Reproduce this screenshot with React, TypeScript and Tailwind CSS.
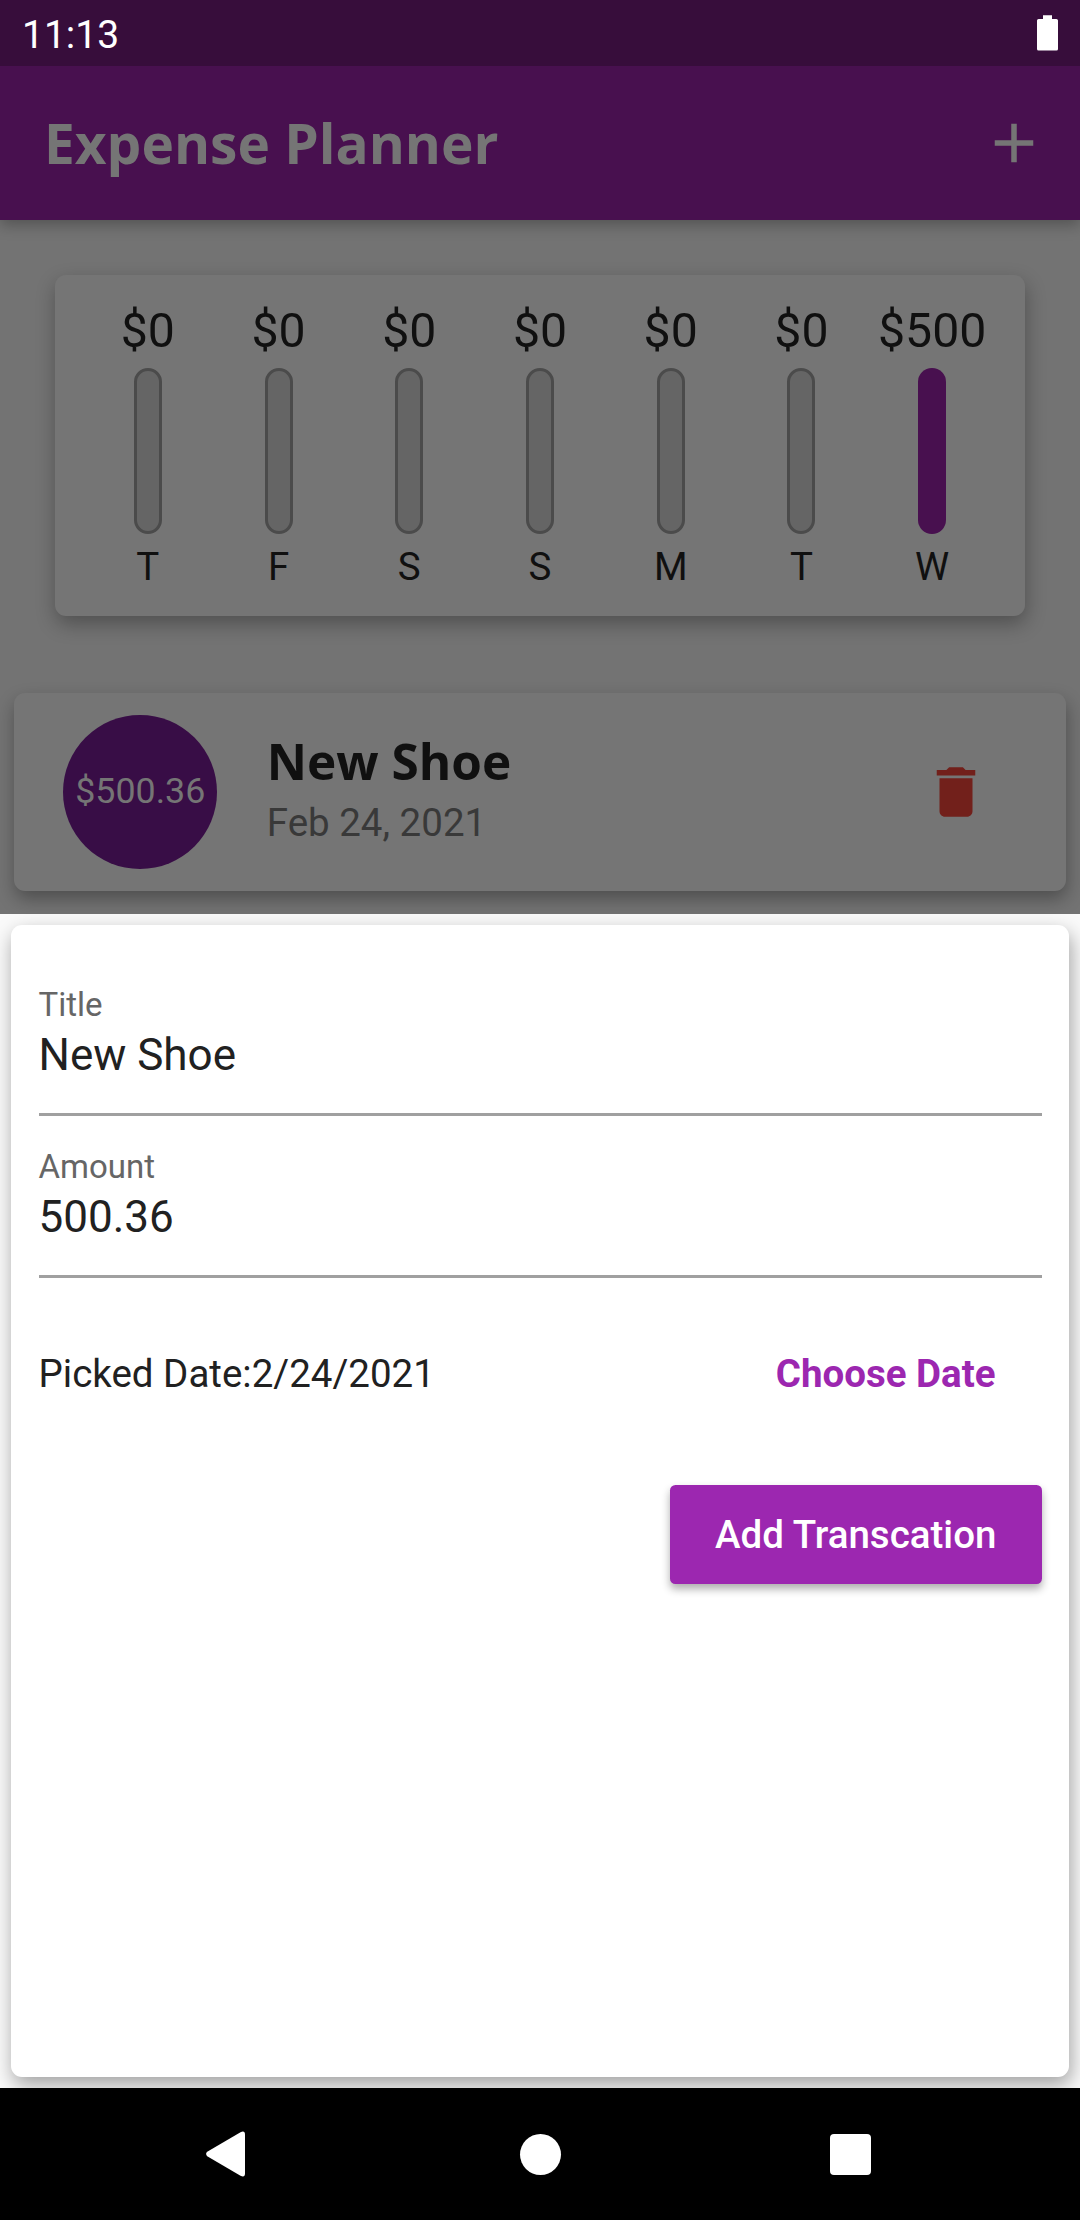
const days = [
  { label: "T", amount: "$0", share: 0 },
  { label: "F", amount: "$0", share: 0 },
  { label: "S", amount: "$0", share: 0 },
  { label: "S", amount: "$0", share: 0 },
  { label: "M", amount: "$0", share: 0 },
  { label: "T", amount: "$0", share: 0 },
  { label: "W", amount: "$500", share: 1 },
];

function StatusBar() {
  return (
    <div className="flex h-[66px] shrink-0 items-start justify-between bg-[#370d3b] pr-[22px] pl-[22px] text-white">
      <span className="mt-[11px] text-[39px] leading-[48px]">11:13</span>
      <svg className="mt-[15px]" width="21" height="36" viewBox="0 0 21 36" fill="currentColor">
        <path d="M6 0.3h9V4h4.4A1.6 1.6 0 0 1 21 5.600V34a1.600 1.600 0 0 1-1.600 1.600H1.600A1.600 1.600 0 0 1 0 34V5.600A1.600 1.600 0 0 1 1.600 4H6z" />
      </svg>
    </div>
  );
}

function AppBar() {
  return (
    <header className="flex h-[154px] shrink-0 items-center justify-between bg-[#48104f] pr-[33px] pl-[44px] text-[#757575] shadow-[0_5px_14px_rgba(0,0,0,0.28)]">
      <h1 className="mb-[2px] font-['Open_Sans'] text-[55px] leading-[75px] font-bold">Expense Planner</h1>
      <svg width="66" height="66" viewBox="0 0 24 24" fill="currentColor">
        <path d="M19 13h-6v6h-2v-6H5v-2h6V5h2v6h6v2z" />
      </svg>
    </header>
  );
}

function Chart() {
  return (
    <section className="mx-[55px] mt-[55px] grid h-[341px] shrink-0 grid-cols-7 rounded-[11px] bg-[#757575] px-[27.5px] pt-[28px] text-[#101010] shadow-[1px_8px_20px_rgba(0,0,0,0.3)]">
      {days.map((day, i) => (
        <div key={i} className="flex min-w-0 flex-col items-center">
          <span className="text-[48.2px] leading-[56px] whitespace-nowrap">{day.amount}</span>
          <div
            className={
              day.share > 0
                ? "mt-[9px] h-[166px] w-[28px] rounded-full bg-[#48104f]"
                : "mt-[9px] h-[166px] w-[28px] rounded-full border-[3px] border-[#4b4b4b] bg-[#656565]"
            }
          />
          <span className="mt-[10px] text-[38.5px] leading-[45px]">{day.label}</span>
        </div>
      ))}
    </section>
  );
}

function TransactionCard() {
  return (
    <section className="mx-[13.750px] mt-[77px] flex h-[198px] shrink-0 items-center rounded-[11px] bg-[#757575] pr-[77px] pl-[49.500px] shadow-[1px_8px_18px_rgba(0,0,0,0.32)]">
      <div className="flex size-[154px] items-center justify-center rounded-full bg-[#380d46] text-[35.8px] text-[#757575]">
        $500.36
      </div>
      <div className="mb-[4px] ml-[49.500px] flex flex-1 flex-col">
        <span className="font-['Open_Sans'] text-[49.500px] leading-[62px] font-bold text-[#101010]">New Shoe</span>
        <span className="mt-[4px] text-[38.5px] leading-[54px] text-[#393939]">Feb 24, 2021</span>
      </div>
      <svg width="66" height="66" viewBox="0 0 24 24" fill="#72201b">
        <path d="M6 19c0 1.1.9 2 2 2h8c1.100 0 2-.9 2-2V7H6v12zM19 4h-3.500l-1-1h-5l-1 1H5v2h14V4z" />
      </svg>
    </section>
  );
}

function Field({ label, value }: { label: string; value: string }) {
  return (
    <div className="flex h-[162px] flex-col border-b-[3px] border-[#a0a0a0]">
      <span className="mt-[31px] text-[33px] leading-[40px] text-[#666666]">{label}</span>
      <span className="mt-[4px] text-[44px] leading-[52px] text-[#212121]">{value}</span>
    </div>
  );
}

function Sheet() {
  return (
    <section className="relative flex flex-1 overflow-hidden bg-[#fafafa] p-[11px]">
      <div className="flex flex-1 flex-col rounded-[11px] bg-white px-[27.5px] pt-[29.5px] shadow-[2px_8px_20px_rgba(0,0,0,0.36)]">
        <Field label="Title" value="New Shoe" />
        <Field label="Amount" value="500.36" />
        <div className="flex h-[192px] items-center justify-between text-[38.5px]">
          <span className="text-[#212121]">Picked Date:2/24/2021</span>
          <button className="mr-[46px] font-bold text-[#9c27b0]">Choose Date</button>
        </div>
        <button className="mt-[15px] flex h-[99px] w-[371.5px] items-center justify-center self-end rounded-[5.500px] bg-[#9c27b0] pt-[1px] text-[38.5px] font-medium text-white shadow-[0_5px_8px_rgba(0,0,0,0.32)]">
          Add Transcation
        </button>
      </div>
    </section>
  );
}

function NavBar() {
  return (
    <nav className="flex h-[132px] shrink-0 items-center bg-black pl-[206px]">
      <svg width="39" height="46" viewBox="0 0 39 46" fill="#ffffff">
        <path d="M1.200 20.800 34.500 1.200Q39-.8 39 3.500V42.500Q39 46.800 34.500 44.800L1.200 25.200Q-1 23 1.200 20.800Z" />
      </svg>
      <div className="ml-[274.5px] size-[41px] rounded-full bg-white" />
      <div className="ml-[269.5px] size-[41px] rounded-[4px] bg-white" />
    </nav>
  );
}

export default function App() {
  return (
    <div className="flex h-[2220px] w-[1080px] flex-col overflow-hidden bg-[#737373] font-['Roboto',sans-serif]">
      <StatusBar />
      <div className="flex h-[847.500px] shrink-0 flex-col overflow-hidden">
        <AppBar />
        <Chart />
        <TransactionCard />
      </div>
      <Sheet />
      <NavBar />
    </div>
  );
}
